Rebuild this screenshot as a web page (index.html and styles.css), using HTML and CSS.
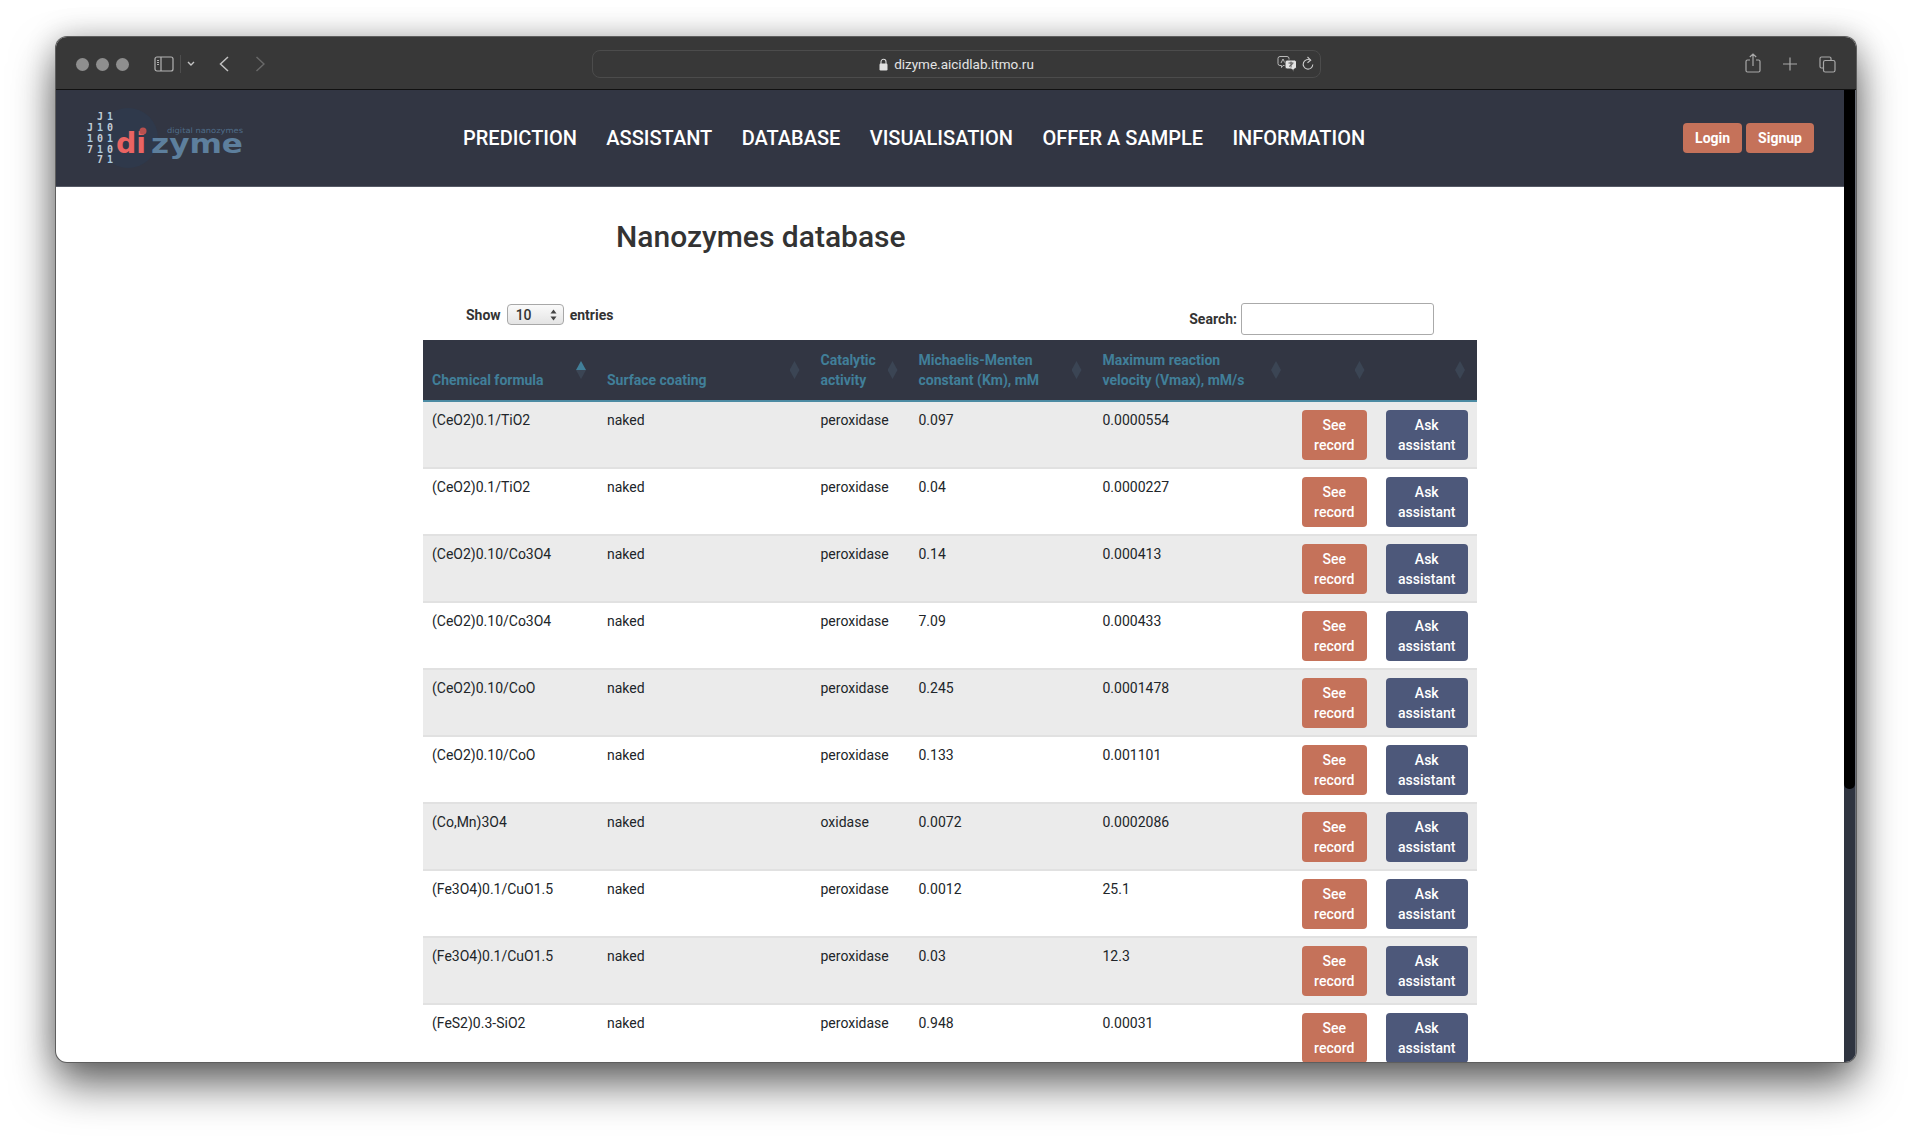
FILE: index.html
```html
<!DOCTYPE html>
<html lang="en">
<head>
    <meta charset="UTF-8">
    <meta name="viewport" content="width=device-width, initial-scale=1.0">
    <title>dizyme.aicidlab.itmo.ru</title>
    <link rel="stylesheet" href="styles.css">
</head>
<body>
<div class="window">
    <div class="toolbar">
        <div class="lights"><span></span><span></span><span></span></div>
        <svg class="tb-icon sidebar-icon" width="20" height="16" viewBox="0 0 20 16" fill="none" stroke="#b4b4b4" stroke-width="1.2">
            <rect x="1" y="1" width="18" height="14" rx="2"/>
            <path d="M7 1v14M3 4.500h2M3 6.500h2M3 8.500h2"/>
        </svg>
        <span class="tb-sep"></span>
        <svg class="tb-icon chevron-down" width="8" height="6" viewBox="0 0 8 6" fill="none" stroke="#c4c4c4" stroke-width="1.4"><path d="M1 1l3 3 3-3"/></svg>
        <svg class="tb-icon back" width="10" height="16" viewBox="0 0 10 16" fill="none" stroke="#c0c0c0" stroke-width="1.5"><path d="M9 1L1.500 8 9 15"/></svg>
        <svg class="tb-icon forward" width="10" height="16" viewBox="0 0 10 16" fill="none" stroke="#686868" stroke-width="1.5"><path d="M1.500 1L9 8l-7.500 7"/></svg>
        <div class="address">
            <div class="address-text">
                <svg width="9" height="13" viewBox="0 0 9 13"><path d="M2 6V3.800a2.500 2.500 0 0 1 5 0V6" fill="none" stroke="#d8d8d8" stroke-width="1.1"/><rect x="0.500" y="5.500" width="8" height="7" rx="1.200" fill="#e0e0e0"/></svg>
                <span>dizyme.aicidlab.itmo.ru</span>
            </div>
            <svg class="translate" width="20" height="16" viewBox="0 0 20 16" fill="none" stroke="#b8b8b8" stroke-width="1">
                <path d="M3 0.500h7a2 2 0 0 1 2 2v5a2 2 0 0 1-2 2H6l-1.500 2v-2H3a2 2 0 0 1-2-2v-5a2 2 0 0 1 2-2z"/>
                <path d="M4 7l2-4 2 4"/>
                <path d="M10 4h7.500a2 2 0 0 1 2 2v5a2 2 0 0 1-2 2H17v2.500L14.500 13H10a2 2 0 0 1-2-2V6a2 2 0 0 1 2-2z" fill="#e2e2e2" stroke="#383838"/>
                <path d="M11.500 7h5M14 5.500v6M12 10.500l4-3" stroke="#555"/>
            </svg>
            <svg class="reload" width="12" height="15" viewBox="0 0 12 15" fill="none" stroke="#c8c8c8" stroke-width="1.1">
                <path d="M8.500 4.200A4.800 4.800 0 1 0 10.800 8.500"/>
                <path d="M5.500 1l3.200 3.200-3.200 2.600"/>
            </svg>
        </div>
        <div class="toolbar-right">
            <svg class="share" width="16" height="20" viewBox="0 0 16 20" fill="none" stroke="#a8a8a8" stroke-width="1.2">
                <path d="M5 7H2.500a1.500 1.500 0 0 0-1.500 1.500v9A1.500 1.500 0 0 0 2.500 19h11a1.500 1.500 0 0 0 1.500-1.500v-9A1.500 1.500 0 0 0 13.500 7H11M8 13V1M4.800 4L8 1l3.200 3"/>
            </svg>
            <svg width="14" height="14" viewBox="0 0 14 14" fill="none" stroke="#a8a8a8" stroke-width="1.2"><path d="M7 0.500v13M0 7h14"/></svg>
            <svg width="17" height="17" viewBox="0 0 17 17" fill="none" stroke="#a8a8a8" stroke-width="1.2">
                <path d="M4 12H2.500A1.500 1.500 0 0 1 1 10.500v-8A1.500 1.500 0 0 1 2.500 1h8A1.500 1.500 0 0 1 12 2.500V4"/>
                <rect x="4.500" y="4.500" width="11.500" height="11.500" rx="1.800"/>
            </svg>
        </div>
    </div>

    <div class="viewport">
        <div class="page">
            <header class="navbar">
                <svg class="logo" width="160" height="60" viewBox="0 0 160 60">
                    <circle cx="43" cy="30" r="30" fill="#2f394b"/>
                    <g class="logo-bits">
                        <text x="12" y="12">J</text><text x="22" y="12" class="bit-light">1</text>
                        <text x="2" y="23">J</text><text x="12" y="23" class="bit-light">1</text><text x="22" y="23">0</text>
                        <text x="2" y="34" class="bit-light">1</text><text x="12" y="34">0</text><text x="22" y="34" class="bit-light">1</text>
                        <text x="2" y="45">7</text><text x="12" y="45" class="bit-light">1</text><text x="22" y="45">0</text>
                        <text x="12" y="55">7</text><text x="22" y="55" class="bit-light">1</text>
                    </g>
                    <text x="82" y="25" class="logo-tag" textLength="76" lengthAdjust="spacingAndGlyphs">digital nanozymes</text>
                    <text x="31" y="45" class="logo-d" textLength="30" lengthAdjust="spacingAndGlyphs">di</text>
                    <text x="66" y="45" class="logo-z" textLength="92" lengthAdjust="spacingAndGlyphs">zyme</text>
                    <circle cx="58" cy="23" r="3.500" fill="#b8504f"/>
                </svg>
                <nav class="nav-links">
                    <a href="#">PREDICTION</a>
                    <a href="#">ASSISTANT</a>
                    <a href="#">DATABASE</a>
                    <a href="#">VISUALISATION</a>
                    <a href="#">OFFER A SAMPLE</a>
                    <a href="#">INFORMATION</a>
                </nav>
                <div class="auth">
                    <a class="auth-btn" href="#">Login</a>
                    <a class="auth-btn" href="#">Signup</a>
                </div>
            </header>

            <main class="content">
                <h1>Nanozymes database</h1>
                <div class="table-tools">
                    <label class="length">Show
                        <span class="fake-select">10
                            <svg width="7" height="12" viewBox="0 0 7 12" fill="#444"><path d="M3.500 0.500L6.500 4.500H0.500zM3.500 11.500L0.500 7.500H6.500z"/></svg>
                        </span>
                        entries</label>
                    <label class="search">Search: <input type="text"></label>
                </div>
                <table class="records">
                    <thead>
                        <tr>
                            <th class="c-formula sorted">Chemical formula</th>
                            <th class="c-coating">Surface coating</th>
                            <th class="c-activity">Catalytic activity</th>
                            <th class="c-km">Michaelis-Menten constant (Km), mM</th>
                            <th class="c-vmax">Maximum reaction<br>velocity (Vmax), mM/s</th>
                            <th class="c-see"></th>
                            <th class="c-ask"></th>
                        </tr>
                    </thead>
                    <tbody>
                        <tr><td>(CeO2)0.1/TiO2</td><td>naked</td><td>peroxidase</td><td>0.097</td><td>0.0000554</td><td><a class="btn btn-see" href="#">See record</a></td><td><a class="btn btn-ask" href="#">Ask assistant</a></td></tr>
                        <tr><td>(CeO2)0.1/TiO2</td><td>naked</td><td>peroxidase</td><td>0.04</td><td>0.0000227</td><td><a class="btn btn-see" href="#">See record</a></td><td><a class="btn btn-ask" href="#">Ask assistant</a></td></tr>
                        <tr><td>(CeO2)0.10/Co3O4</td><td>naked</td><td>peroxidase</td><td>0.14</td><td>0.000413</td><td><a class="btn btn-see" href="#">See record</a></td><td><a class="btn btn-ask" href="#">Ask assistant</a></td></tr>
                        <tr><td>(CeO2)0.10/Co3O4</td><td>naked</td><td>peroxidase</td><td>7.09</td><td>0.000433</td><td><a class="btn btn-see" href="#">See record</a></td><td><a class="btn btn-ask" href="#">Ask assistant</a></td></tr>
                        <tr><td>(CeO2)0.10/CoO</td><td>naked</td><td>peroxidase</td><td>0.245</td><td>0.0001478</td><td><a class="btn btn-see" href="#">See record</a></td><td><a class="btn btn-ask" href="#">Ask assistant</a></td></tr>
                        <tr><td>(CeO2)0.10/CoO</td><td>naked</td><td>peroxidase</td><td>0.133</td><td>0.001101</td><td><a class="btn btn-see" href="#">See record</a></td><td><a class="btn btn-ask" href="#">Ask assistant</a></td></tr>
                        <tr><td>(Co,Mn)3O4</td><td>naked</td><td>oxidase</td><td>0.0072</td><td>0.0002086</td><td><a class="btn btn-see" href="#">See record</a></td><td><a class="btn btn-ask" href="#">Ask assistant</a></td></tr>
                        <tr><td>(Fe3O4)0.1/CuO1.5</td><td>naked</td><td>peroxidase</td><td>0.0012</td><td>25.1</td><td><a class="btn btn-see" href="#">See record</a></td><td><a class="btn btn-ask" href="#">Ask assistant</a></td></tr>
                        <tr><td>(Fe3O4)0.1/CuO1.5</td><td>naked</td><td>peroxidase</td><td>0.03</td><td>12.3</td><td><a class="btn btn-see" href="#">See record</a></td><td><a class="btn btn-ask" href="#">Ask assistant</a></td></tr>
                        <tr><td>(FeS2)0.3-SiO2</td><td>naked</td><td>peroxidase</td><td>0.948</td><td>0.00031</td><td><a class="btn btn-see" href="#">See record</a></td><td><a class="btn btn-ask" href="#">Ask assistant</a></td></tr>
                    </tbody>
                </table>
            </main>
        </div>
        <div class="scrollbar"><div class="scroll-thumb"></div></div>
    </div>
</div>
</body>
</html>
```

FILE: styles.css
```css
* {
    box-sizing: border-box;
}

html, body {
    height: 100%;
}

body {
    margin: 0;
    padding: 37px 56px 74px 56px;
    background-color: #ffffff;
    font-family: Roboto, "Liberation Sans", sans-serif;
    overflow: hidden;
}

/* browser window */
.window {
    height: 1025px;
    display: flex;
    flex-direction: column;
    border-radius: 11px;
    overflow: hidden;
    background-color: #fff;
    box-shadow: 0 0 0 1px #5e5e5e, 0 22px 44px rgba(0, 0, 0, 0.6), 0 0 30px rgba(0, 0, 0, 0.22);
}

.toolbar {
    height: 53px;
    flex: none;
    padding-top: 2px;
    display: flex;
    align-items: center;
    background-color: #383838;
    border-bottom: 1px solid #111;
}

.lights {
    display: flex;
    gap: 7px;
    margin-left: 20px;
}

.lights span {
    width: 13px;
    height: 13px;
    border-radius: 50%;
    background-color: #8e8e8e;
}

.sidebar-icon {
    margin-left: 25px;
}

.tb-sep {
    width: 1px;
    height: 18px;
    margin-left: 6px;
    background-color: #4e4e4e;
}

.chevron-down {
    margin-left: 6px;
}

.back {
    margin-left: 24px;
}

.forward {
    margin-left: 26px;
}

.address {
    width: 729px;
    height: 28px;
    margin-left: 327px;
    border: 1px solid #4c4c4c;
    border-radius: 8px;
    display: flex;
    align-items: center;
    position: relative;
}

.address-text {
    flex: 1;
    display: flex;
    justify-content: center;
    align-items: center;
    gap: 6px;
    color: #e4e4e4;
    font-size: 13.500px;
}

.translate {
    position: absolute;
    right: 23px;
    top: 5px;
}

.reload {
    position: absolute;
    right: 6px;
    top: 5px;
}

.toolbar-right {
    margin-left: auto;
    margin-right: 20px;
    display: flex;
    align-items: center;
    gap: 22px;
}

.share {
    margin-top: -3px;
}

/* page area */
.viewport {
    flex: 1;
    display: flex;
    min-height: 0;
}

.page {
    flex: 1;
    min-width: 0;
    overflow: hidden;
}

.scrollbar {
    width: 12px;
    background-color: #2f3440;
    border-right: 1px solid #6b6f78;
}

.scroll-thumb {
    height: 699px;
    background-color: #000;
    border-radius: 0 0 5px 5px;
}

.navbar {
    height: 97px;
    display: flex;
    align-items: center;
    background-color: #323643;
    border-bottom: 1px solid #565a66;
}

.logo {
    margin-left: 29px;
    flex: none;
}

.logo-bits text {
    font-family: "DejaVu Sans Mono", monospace;
    font-size: 10px;
    font-weight: bold;
    fill: #c3ccd4;
}

.logo-bits .bit-light {
    fill: #a9cbe0;
}

.logo-tag {
    font-family: "DejaVu Sans", sans-serif;
    font-size: 7.500px;
    fill: #4f6c88;
}

.logo-d {
    font-family: "DejaVu Sans", sans-serif;
    font-size: 29px;
    font-weight: bold;
    fill: #ea6462;
}

.logo-z {
    font-family: "DejaVu Sans", sans-serif;
    font-size: 27px;
    font-weight: bold;
    fill: #5d7f9d;
}

.nav-links {
    margin-left: 218px;
    display: flex;
    gap: 29.400px;
}

.nav-links a {
    color: #fff;
    font-size: 20px;
    font-weight: 500;
    text-decoration: none;
}

.auth {
    margin-left: auto;
    margin-right: 30px;
    display: flex;
    gap: 4px;
}

.auth-btn {
    height: 30px;
    line-height: 30px;
    padding: 0 12px;
    background-color: #c5725a;
    color: #fff;
    font-size: 14px;
    font-weight: 700;
    border-radius: 4px;
    text-decoration: none;
}

/* database */
.content {
    padding-left: 367px;
    width: 1421px;
}

h1 {
    margin: 31px 0 0 193px;
    color: #333;
    font-size: 30px;
    font-weight: 500;
    line-height: 38px;
}

.table-tools {
    height: 37px;
    margin-top: 47px;
    display: flex;
    justify-content: space-between;
    font-size: 14px;
    font-weight: 700;
    color: #333;
}

.length {
    margin: 1px 0 0 43px;
    height: 21px;
    display: flex;
    align-items: center;
    gap: 6px;
}

.fake-select {
    width: 57px;
    height: 21px;
    padding: 0 6px 0 8px;
    display: flex;
    align-items: center;
    justify-content: space-between;
    font-weight: 500;
    background: linear-gradient(#fafafa, #e4e4e4);
    border: 1px solid #a8a8a8;
    border-radius: 4px;
}

.search {
    margin: 0 43px 0 0;
    display: flex;
    align-items: center;
    gap: 4px;
    height: 32px;
}

.search input {
    width: 193px;
    height: 32px;
    border: 1px solid #aaa;
    border-radius: 3px;
    background-color: #fff;
}

.records {
    width: 1054px;
    border-collapse: collapse;
    table-layout: fixed;
    font-size: 14px;
}

.records th {
    height: 61px;
    padding: 0 18px 10px 9px;
    background-color: #323643;
    border-bottom: 2px solid #4c8ba3;
    color: #417f99;
    font-weight: 700;
    line-height: 20px;
    text-align: left;
    vertical-align: bottom;
    position: relative;
}

/* sort arrows, dim unless sorted */
.records th::after {
    content: "";
    position: absolute;
    right: 12px;
    top: 21px;
    width: 10px;
    height: 18px;
    background-color: #3b4554;
    clip-path: polygon(50% 0, 100% 50%, 50% 100%, 0 50%);
}

.records th.sorted::after {
    background: linear-gradient(#417f99 50%, #3b4554 50%);
}

.c-formula { width: 175px; }
.c-coating { width: 213.500px; }
.c-activity { width: 98px; }
.c-km { width: 184px; }
.c-vmax { width: 199.500px; }
.c-see { width: 83.500px; }
.c-ask { width: 100.500px; }

.records td {
    height: 67px;
    padding: 8px 9px 0;
    color: #212529;
    font-weight: 400;
    line-height: 20px;
    vertical-align: top;
    border-bottom: 2px solid #e1e1e1;
}

.records tbody tr:nth-child(odd) td {
    background-color: #ebebeb;
}

.btn {
    display: block;
    padding: 5px 8px;
    border-radius: 4px;
    color: #fff;
    font-weight: 500;
    line-height: 20px;
    text-align: center;
    text-decoration: none;
}

.btn-see {
    margin-right: 1px;
    background-color: #c5725a;
}

.btn-ask {
    background-color: #4d587a;
}
```
